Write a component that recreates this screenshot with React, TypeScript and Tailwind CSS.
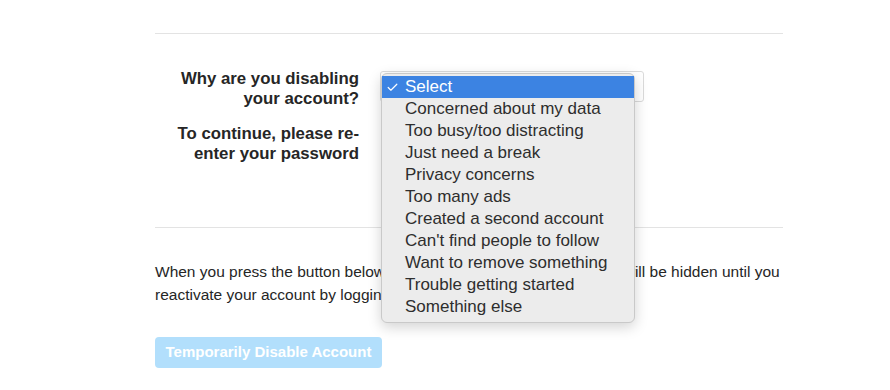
import { Check } from 'lucide-react';

const reasons = [
  'Concerned about my data',
  'Too busy/too distracting',
  'Just need a break',
  'Privacy concerns',
  'Too many ads',
  'Created a second account',
  "Can't find people to follow",
  'Want to remove something',
  'Trouble getting started',
  'Something else',
];

export default function App() {
  return (
    <div className="w-[890px] h-[390px] overflow-hidden bg-white font-['Liberation_Sans',Arial,sans-serif] text-[#262626]">
      <div className="ml-[155px] w-[628px] pt-[33px]">
        <div className="border-t border-[#e3e3e3]" />

        <div className="flex gap-[21px] pt-[35px] pb-[63px]">
          <div className="w-[204px] shrink-0 flex flex-col gap-[15px] text-right text-[16.8px] font-bold leading-[20px]">
            <label>
              Why are you disabling
              <br />
              your account?
            </label>
            <label>
              To continue, please re-
              <br />
              enter your password
            </label>
          </div>

          <div className="relative mt-[2px]">
            <div className="w-[264px] h-[31px] rounded-[3px] border border-[#dbdbdb] bg-white" />

            <div className="absolute left-[1px] top-[2px] w-[254px] rounded-[6px] border border-[#c9c9c9] bg-[#ececec] pt-[2px] pb-[4px] shadow-[0_4px_14px_rgba(0,0,0,0.18)]">
              <div className="relative h-[22px] bg-[#3c83e2] pl-[23px] text-[17px] leading-[22px] text-white">
                <Check className="absolute left-[4px] top-[5px] w-[13px] h-[13px]" strokeWidth={2.2} />
                Select
              </div>
              {reasons.map((r) => (
                <div key={r} className="h-[22px] pl-[23px] text-[17px] leading-[22px] text-[#2e2e2e]">
                  {r}
                </div>
              ))}
            </div>
          </div>
        </div>

        <div className="border-t border-[#e3e3e3]" />

        <p className="pt-[32px] text-[15.5px] leading-[23px] text-[#262626]">
          When you press the button below, your photos, comments and likes will be hidden until you reactivate your
          account by logging back in.
        </p>

        <button className="mt-[31px] h-[31px] w-[227px] rounded-[4px] bg-[#b2dffc] text-[15px] font-bold text-white">
          Temporarily Disable Account
        </button>
      </div>
    </div>
  );
}
